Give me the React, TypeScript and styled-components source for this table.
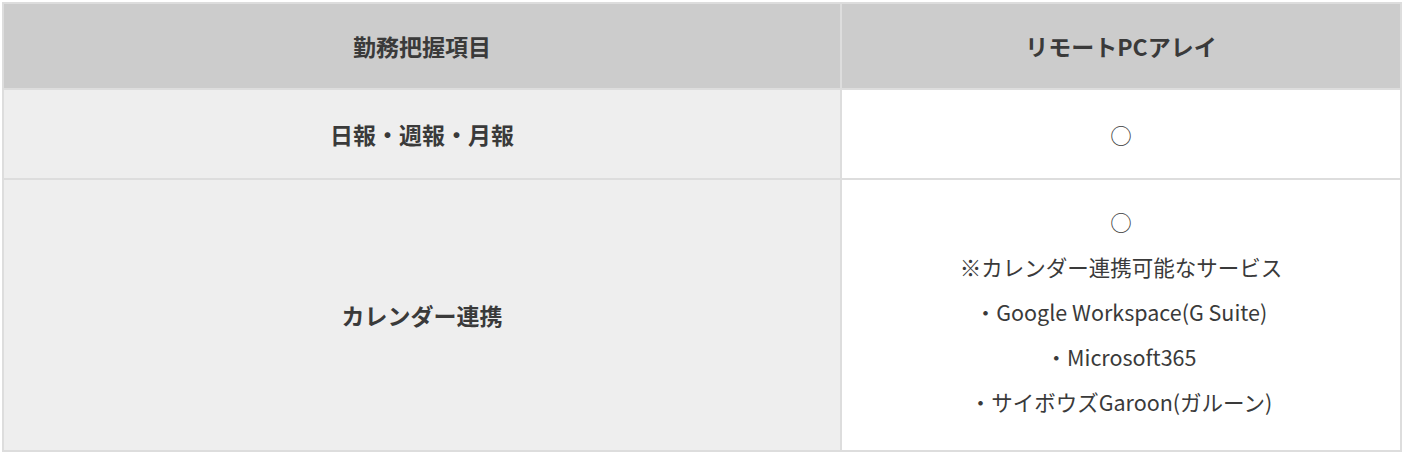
import React, { FC } from "react";
import styled, { createGlobalStyle } from "styled-components";

type Row = {
  item: string;
  values: string[];
};

const rows: Row[] = [
  { item: "日報・週報・月報", values: ["○"] },
  {
    item: "カレンダー連携",
    values: [
      "○",
      "※カレンダー連携可能なサービス",
      "・Google Workspace(G Suite)",
      "・Microsoft365",
      "・サイボウズGaroon(ガルーン)",
    ],
  },
];

const App: FC = () => {
  return (
    <>
      <GlobalStyle />
      <Wrapper>
        <Table>
          <colgroup>
            <col style={{ width: 838 }} />
            <col />
          </colgroup>
          <thead>
            <tr>
              <HeadCell>勤務把握項目</HeadCell>
              <HeadCell>リモートPCアレイ</HeadCell>
            </tr>
          </thead>
          <tbody>
            {rows.map((row) => (
              <tr key={row.item}>
                <ItemCell tall={row.values.length > 1}>{row.item}</ItemCell>
                <ValueCell tall={row.values.length > 1}>
                  {row.values.map((value) => (
                    <ValueLine key={value}>{value}</ValueLine>
                  ))}
                </ValueCell>
              </tr>
            ))}
          </tbody>
        </Table>
      </Wrapper>
    </>
  );
};

const GlobalStyle = createGlobalStyle`
  html, body {
    margin: 0;
    padding: 0;
    background: #fff;
  }

  body {
    font-family: "Noto Sans CJK JP", "Noto Sans", sans-serif;
    color: #333;
  }
`;

const Wrapper = styled.div`
  padding: 2px 2px 4px 2px;
`;

const Table = styled.table`
  width: 1400px;
  border-collapse: collapse;
  table-layout: fixed;
`;

const HeadCell = styled.th`
  height: 84px;
  padding: 0;
  border: 2px solid #ddd;
  background-color: #ccc;
  font-size: 23px;
  font-weight: bold;
  color: #3a3a3a;
  text-align: center;
  vertical-align: middle;
`;

const ItemCell = styled.td<{ tall?: boolean }>`
  height: ${({ tall }) => (tall ? "270px" : "88px")};
  padding: 0;
  border: 2px solid #ddd;
  background-color: #eee;
  font-size: 23px;
  font-weight: bold;
  color: #3a3a3a;
  text-align: center;
  vertical-align: middle;
`;

const ValueCell = styled.td<{ tall?: boolean }>`
  padding: ${({ tall }) => (tall ? "18px 0 26px" : "0")};
  border: 2px solid #ddd;
  background-color: #fff;
  font-size: 21.5px;
  color: #3a3a3a;
  text-align: center;
  vertical-align: middle;
`;

const ValueLine = styled.div`
  line-height: 45px;
`;

export default App;
